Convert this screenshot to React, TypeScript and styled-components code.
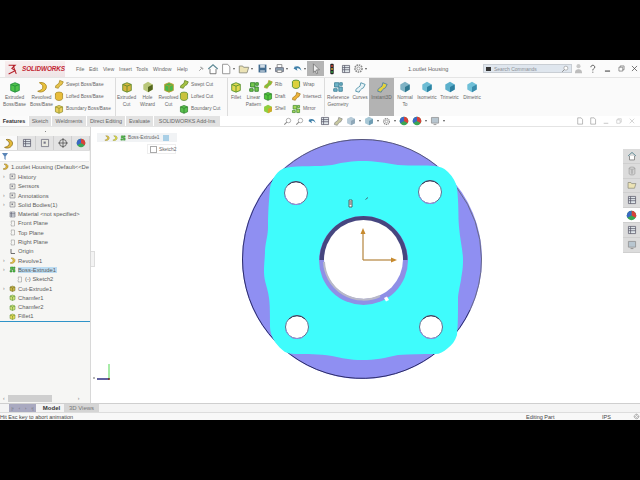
import React from "react";
import styled, { createGlobalStyle } from "styled-components";

const Global = createGlobalStyle`
  html, body { margin: 0; padding: 0; background: #000; }
  body { width: 640px; height: 480px; overflow: hidden; font-family: "Liberation Sans", Arial, sans-serif; color: #3c3c3c; }
  #root { width: 640px; height: 480px; }
`;

const Page = styled.div`
  width: 640px; height: 480px; background: #000; padding: 60px 0; box-sizing: border-box;
`;
const Win = styled.div`
  width: 640px; height: 360px; background: #fff; display: flex; flex-direction: column; overflow: hidden;
`;
const MenuBar = styled.div`
  height: 17px; flex: none; display: flex; align-items: center; background: #fbfbfb; font-size: 5.2px; color: #666;
`;
const Logo = styled.div`
  width: 60px; height: 16px; margin: 0 11px 0 5px; flex: none; display: flex; align-items: center; gap: 3px; padding-left: 2px; box-sizing: border-box;
  background: linear-gradient(#f8eeee, #efe4e6);
  color: #c22330; font-weight: 700; font-style: italic; font-size: 6.4px; letter-spacing: -.1px;
`;
const MenuItem = styled.span<{ $w: number }>` width: ${p => p.$w}px; flex: none; white-space: nowrap; `;
const QuickSlot = styled.div<{ $w: number; $on?: boolean }>`
  width: ${p => p.$w}px; height: 15px; flex: none; display: flex; align-items: center; justify-content: center; gap: 1px;
  background: ${p => (p.$on ? "#b4b4b4" : "transparent")};
`;
const Caret = styled.span` width: 0; height: 0; border-left: 1.5px solid transparent; border-right: 1.5px solid transparent; border-top: 2px solid #555; `;
const Title = styled.div` width: 75px; margin-left: 40px; flex: none; white-space: nowrap; font-size: 5.6px; color: #666; `;
const Search = styled.div`
  width: 89px; height: 9px; flex: none; margin-left: 0; background: #dfe6ee; border: 1px solid #c9ced4; box-sizing: border-box;
  display: flex; align-items: center; font-size: 5px; color: #8b8f95; padding: 0 2px; gap: 3px;
`;
const SearchKey = styled.span` width: 5px; height: 4px; background: #333; flex: none; `;
const SearchText = styled.span` flex: 1; white-space: nowrap; `;

const Ribbon = styled.div`
  height: 39px; flex: none; display: flex; background: #fafafa; border-top: 1px solid #e5e5e5; box-sizing: border-box;
`;
const Group = styled.div<{ $w: number; $line?: boolean }>`
  width: ${p => p.$w}px; flex: none; display: flex; box-sizing: border-box; border-right: ${p => (p.$line ? "1px solid #dcdcdc" : "none")};
`;
const BigBtn = styled.div<{ $w: number; $on?: boolean }>`
  width: ${p => p.$w}px; flex: none; display: flex; flex-direction: column; align-items: center; padding-top: 3px; box-sizing: border-box;
  font-size: 4.8px; line-height: 7px; text-align: center; color: #666; background: ${p => (p.$on ? "#b3b3b3" : "transparent")};
`;
const BigLabel = styled.div` margin-top: 1px; white-space: pre; `;
const SmallCol = styled.div<{ $w: number }>`
  width: ${p => p.$w}px; flex: none; display: flex; flex-direction: column; justify-content: space-around; padding: 0 0 1px; 
`;
const SmallBtn = styled.div`
  display: flex; align-items: center; gap: 2px; font-size: 4.8px; color: #666; white-space: nowrap; height: 12px;
`;

const TabRow = styled.div`
  height: 11px; flex: none; display: flex; align-items: stretch; background: #fff; border-bottom: 1px solid #e4e4e4; box-sizing: border-box;
`;
const Tab = styled.div<{ $w: number; $on?: boolean }>`
  width: ${p => p.$w}px; flex: none; margin-right: 1px; display: flex; align-items: center; justify-content: center; white-space: nowrap;
  font-size: 5.4px; font-weight: ${p => (p.$on ? 700 : 400)}; color: ${p => (p.$on ? "#333" : "#666")};
  background: ${p => (p.$on ? "#fbfbfb" : "#e2e2e2")};
`;
const HeadsUp = styled.div`
  margin-left: 62px; display: flex; align-items: center; gap: 3px; flex: none;
`;
const WinBtns = styled.div`
  margin-left: auto; padding-right: 4px; display: flex; align-items: center; gap: 5px;
`;

const Main = styled.div` flex: 1; display: flex; min-height: 0; `;
const Side = styled.div`
  width: 91px; flex: none; background: #f6f6f4; border-right: 1px solid #d8d8d8; box-sizing: border-box; display: flex; flex-direction: column; position: relative;
`;
const SideGrip = styled.div` height: 9px; flex: none; display: flex; justify-content: center; align-items: center; `;
const GripDot = styled.span` width: 1px; height: 1px; background: #888; `;
const SideTabs = styled.div` height: 15px; flex: none; display: flex; border-bottom: 1px solid #ddd; box-sizing: border-box; `;
const SideTab = styled.div<{ $on?: boolean }>`
  width: 18px; flex: none; display: flex; align-items: center; justify-content: center; box-sizing: border-box;
  background: ${p => (p.$on ? "#fafafa" : "#e3e3e3")}; border-right: 1px solid #cfcfcf;
`;
const FilterRow = styled.div` height: 11px; flex: none; background: #fff; margin-right: 1px; padding-left: 2px; display: flex; align-items: center; border-bottom: 1px solid #e8e8e8; box-sizing: border-box; `;
const Tree = styled.div` flex: none; padding-top: 1px; height: 151px; box-sizing: border-box; border-bottom: 1px solid #2f93c8; overflow: hidden; `;
const Row = styled.div<{ $depth?: number; $sel?: boolean }>`
  height: 9.3px; display: flex; align-items: center; white-space: nowrap; font-size: 5.8px; color: #5c5c5c;
  padding-left: ${p => (p.$depth ?? 2)}px;
`;
const Arrow = styled.span` width: 6px; flex: none; font-size: 5px; color: #777; line-height: 1; `;
const RowText = styled.span<{ $sel?: boolean }>` margin-left: 2px; background: ${p => (p.$sel ? "#bcdcf2" : "transparent")}; padding-right: 1px; `;
const SideFill = styled.div` flex: 1; `;
const HScroll = styled.div` height: 8px; flex: none; margin-bottom: 1px; display: flex; align-items: center; font-size: 5px; color: #777; padding: 0 3px; `;
const HThumb = styled.div` width: 44px; height: 7px; background: #cfcfcf; margin: 0 26px 0 3px; flex: none; `;

const Viewport = styled.div` flex: 1; position: relative; background: #fff; overflow: hidden; `;
const Crumbs = styled.div`
  position: absolute; left: 6px; top: 6px; height: 9px; width: 80px; background: #f1f3f5; display: flex; align-items: center; gap: 2px; padding-left: 7px; box-sizing: border-box; font-size: 4.8px; color: #666;
`;
const CrumbEnd = styled.span` width: 6px; height: 6px; background: #a9cfe6; margin-left: 2px; `;
const SketchTag = styled.div`
  position: absolute; left: 56px; top: 17px; height: 10px; width: 29px; border: 1px solid #eee; box-sizing: border-box; display: flex; align-items: center; gap: 2px; padding-left: 2px; font-size: 4.8px; color: #666; background: #fff;
`;
const Check = styled.span` width: 5px; height: 5px; border: 1px solid #aaa; flex: none; `;
const SideGripTab = styled.div`
  position: absolute; left: 0; top: 124px; width: 3px; height: 14px; background: #f3f3f3; border: 1px solid #ddd; border-left: none;
`;
const Drawing = styled.svg` display: block; position: absolute; left: -91px; top: -127px; `;
const TaskPane = styled.div`
  position: absolute; right: 0; top: 22px; width: 17px; display: flex; flex-direction: column; background: #dcdcdc;
`;
const TaskBtn = styled.div<{ $on?: boolean }>`
  height: 14.8px; display: flex; align-items: center; justify-content: center; background: ${p => (p.$on ? "#fff" : "#dcdcdc")}; border-bottom: 1px solid #cfcfcf; box-sizing: border-box;
`;

const BottomTabs = styled.div`
  height: 9px; flex: none; display: flex; align-items: center; background: #f4f4f4; border-top: 1px solid #cfcfcf; box-sizing: border-box; font-size: 6px; padding-left: 9px;
`;
const Nav = styled.div` width: 27px; height: 8px; background: #a9a9c0; flex: none; margin-right: 5px; display: flex; align-items: center; justify-content: space-around; font-size: 4px; color: #666; `;
const ModelTab = styled.div` width: 21px; flex: none; font-weight: 700; color: #333; text-align: center; margin-right: 2px; `;
const ViewsTab = styled.div` width: 35px; height: 8px; flex: none; background: #d5d5d5; color: #777; text-align: center; line-height: 8px; `;
const Status = styled.div`
  height: 8px; flex: none; display: flex; align-items: center; background: #f8f8f8; border-top: 1px solid #ddd; box-sizing: border-box; font-size: 5.5px; color: #444; white-space: nowrap;
`;
const StatusLeft = styled.span` width: 526px; flex: none; `;
const StatusMid = styled.span` width: 76px; flex: none; `;
const StatusEnd = styled.span` width: 31px; flex: none; `;

type Kind = "box" | "ring" | "swoosh" | "cyl" | "cube" | "home" | "page" | "folder" | "save" | "print" | "undo" | "arrow" | "light" | "list" | "gear" | "mag" | "ball" | "monitor" | "pin" | "user" | "plus" | "plane" | "sq" | "orig" | "cross" | "x" | "min" | "win" | "help" | "trash";

const Ico: React.FC<{ k: Kind; c?: string; c2?: string; s?: number }> = ({ k, c = "#8cc63f", c2 = "#3a7d1d", s = 11 }) => {
  const body = () => {
    switch (k) {
      case "box": return <><path d="M2 4l5-2 5 2v7l-5 2-5-2z" fill={c} stroke={c2} /><path d="M7 6v7M2 4l5 2 5-2" fill="none" stroke={c2} /></>;
      case "ring": return <path d="M4 2c5-1 9 2 8 6s-6 6-10 4c3-1 6-2 6-5s-2-3-4-5z" fill={c} stroke={c2} />;
      case "swoosh": return <path d="M2 12c0-4 3-4 5-6l1-4 5 2-2 4c-3 1-4 3-5 5z" fill={c} stroke={c2} />;
      case "cyl": return <><ellipse cx="7" cy="4" rx="5" ry="2.5" fill={c} stroke={c2} /><path d="M2 4v7c2 3 8 3 10 0V4" fill={c} stroke={c2} /></>;
      case "cube": return <><path d="M7 1l5.5 3v6L7 13l-5.5-3V4z" fill={c} /><path d="M7 7l5.5-3v6L7 13z" fill={c2} /></>;
      case "home": return <><path d="M1.5 7L7 2l5.5 5" fill="none" stroke="#5f8a96" strokeWidth="1.4" /><path d="M3.5 7v5.5h7V7" fill="#fff" stroke="#6b6b6b" /></>;
      case "page": return <path d="M3 1.5h6l2.5 3v8H3z" fill="#fff" stroke="#8a8a8a" />;
      case "folder": return <path d="M1.5 11.5v-8h4l1 1.5h6l-2 6.5z" fill="#ece3b5" stroke="#8a8a7a" />;
      case "save": return <><path d="M2 2h10v10H2z" fill="#416b8f" /><path d="M4 2h6v4H4z" fill="#cfdbe5" /><path d="M4 9h6v3H4z" fill="#9fb4c6" /></>;
      case "print": return <><path d="M4 2h6v4H4z" fill="#fff" stroke="#777" /><path d="M2 6h10v5H2z" fill="#8fa6b8" stroke="#667" /><path d="M4 9h6v3H4z" fill="#fff" stroke="#777" /></>;
      case "undo": return <path d="M3 5c4-2 8-1 9 5-2-3-4-4-6-3l1 3-5-3 3-4z" fill="#3e7fa8" />;
      case "arrow": return <path d="M4 1l7 7H7.5l1.5 4-1.5.5L6 9l-2 2z" fill="#eee" stroke="#666" strokeWidth=".8" />;
      case "light": return <><rect x="5" y="1" width="4" height="12" rx="1" fill="#222" /><circle cx="7" cy="3.5" r="1.1" fill="#d43" /><circle cx="7" cy="7" r="1.1" fill="#da3" /><circle cx="7" cy="10.5" r="1.1" fill="#3a4" /></>;
      case "list": return <><path d="M2 2h10v10H2z" fill="#dfe6ea" stroke="#556" /><path d="M2 5h10M2 8h10M5 2v10" stroke="#556" /></>;
      case "gear": return <><circle cx="7" cy="7" r="4.5" fill="none" stroke="#888" strokeWidth="2" strokeDasharray="2 1" /><circle cx="7" cy="7" r="2" fill="none" stroke="#888" /></>;
      case "mag": return <><circle cx="8.5" cy="5.5" r="3.5" fill="#fff" stroke="#888" /><path d="M6 8l-4 4" stroke="#888" strokeWidth="1.6" /></>;
      case "ball": return <><circle cx="7" cy="7" r="6" fill="#3aa655" /><path d="M7 7V1a6 6 0 0 1 5.2 9z" fill="#d9413a" /><path d="M7 7L1.8 10A6 6 0 0 1 7 1z" fill="#3b68c4" /></>;
      case "monitor": return <><path d="M2 2h10v8H2z" fill="#b8c6d0" stroke="#8a8a8a" /><path d="M5 12h4" stroke="#777" /></>;
      case "pin": return <path d="M4 10l3-3M6 4l4 4M7 3l4 4" stroke="#555" fill="none" />;
      case "user": return <><circle cx="7" cy="4" r="2.6" fill="#c9c9c9" /><path d="M2.5 13c0-4 2-5 4.5-5s4.5 1 4.5 5z" fill="#bdbdbd" /></>;
      case "plus": return <><path d="M3 2h5v5H3zM8 7h4v5H8z" fill={c} stroke={c2} /><path d="M2 9h4v3H2zM9 2h3v3H9z" fill={c} stroke={c2} /></>;
      case "plane": return <path d="M4 2h7v10H4l1-2-1-1 1-2-1-1 1-2z" fill="none" stroke="#888" />;
      case "sq": return <><path d="M2 2h10v10H2z" fill="#e8e8e0" stroke="#667" /><path d="M5 5h3v3H5z" fill="#778" /></>;
      case "orig": return <path d="M4 2v9h8" fill="none" stroke="#444" strokeWidth="1.5" />;
      case "cross": return <><circle cx="7" cy="7" r="5" fill="none" stroke="#444" /><path d="M7 0v14M0 7h14" stroke="#444" /></>;
      case "x": return <path d="M3 3l8 8M11 3l-8 8" stroke={c} strokeWidth="1.1" />;
      case "min": return <path d="M3 11h8" stroke={c} strokeWidth="1.4" />;
      case "win": return <path d="M3 5h6v6H3zM5 5V3h6v6H9" fill="none" stroke={c} />;
      case "help": return <path d="M4.5 5c0-4 6-4 6 0 0 2-3 2-3 5M7.5 12v1.5" fill="none" stroke="#444" strokeWidth="1.4" />;
      case "trash": return <><ellipse cx="7" cy="3" rx="4" ry="1.5" fill="none" stroke="#999" /><path d="M3 3v8c1 2 7 2 8 0V3M6 5v6M8 5v6" fill="none" stroke="#999" /></>;
    }
  };
  return <svg width={s} height={s} viewBox="0 0 14 14" style={{ flex: "none" }}>{body()}</svg>;
};

const big = (label: string, w: number, k: Kind, c: string, c2: string, on?: boolean) => (
  <BigBtn $w={w} $on={on} key={label}><Ico k={k} c={c} c2={c2} s={12} /><BigLabel>{label}</BigLabel></BigBtn>
);
const small = (label: string, k: Kind, c: string, c2: string) => (
  <SmallBtn key={label}><Ico k={k} c={c} c2={c2} s={10} />{label}</SmallBtn>
);

const Y = "#e6c64a", YD = "#9a7c1c", G = "#57c24a", GD = "#2b7d2a";

const treeRows: { t: string; k: Kind; c?: string; c2?: string; arrow?: boolean; d?: number; sel?: boolean }[] = [
  { t: "History", k: "sq", arrow: true },
  { t: "Sensors", k: "sq" },
  { t: "Annotations", k: "sq", arrow: true },
  { t: "Solid Bodies(1)", k: "sq", arrow: true },
  { t: "Material <not specified>", k: "list" },
  { t: "Front Plane", k: "plane" },
  { t: "Top Plane", k: "plane" },
  { t: "Right Plane", k: "plane" },
  { t: "Origin", k: "orig" },
  { t: "Revolve1", k: "ring", c: Y, c2: YD, arrow: true },
  { t: "Boss-Extrude1", k: "plus", c: G, c2: GD, arrow: true, sel: true },
  { t: "(-) Sketch2", k: "plane", d: 16 },
  { t: "Cut-Extrude1", k: "box", c: "#c9b64a", c2: "#6d6a1e", arrow: true },
  { t: "Chamfer1", k: "box", c: "#cfe07a", c2: "#4f8a2a" },
  { t: "Chamfer2", k: "box", c: "#cfe07a", c2: "#4f8a2a" },
  { t: "Fillet1", k: "box", c: "#e6d95a", c2: "#5f8a2a" },
];

const plate = "M285 168 C300 165 318 167 332 165 C345 162 352 161 362 161 C375 161 385 163 398 165 C412 166 425 165 435 166 C442 167 445 169 448 172 C453 177 456 182 457 188 C459 205 458 215 459 227 C460 240 463 250 463 260 C463 270 462 272 461 280 C459 290 458 295 458 298 C458 315 458 325 457 335 C455 341 452 345 448 348 C443 352 440 354 435 354 C422 354 410 354 398 355 C385 358 375 360 362 360 C350 360 342 358 332 356 C318 354 308 354 295 354 C291 354 288 353 285 352 C281 349 278 346 275 342 C272 337 270 332 270 327 C270 315 270 305 269 298 C268 288 264 282 264 272 C264 262 265 258 265 250 C266 240 268 235 268 227 C268 212 269 200 270 188 C272 178 278 170 285 168Z";

const Hole = ({ x, y }: { x: number; y: number }) => (
  <g>
    <circle cx={x} cy={y} r={11.5} fill="#fff" stroke="#5d6d8f" strokeWidth="1" />
    <path d={`M${x - 11} ${y + 3}A11.5 11.5 0 0 0 ${x + 6} ${y + 10}`} fill="none" stroke="#8f8fe0" strokeWidth="1" />
    <path d={`M${x - 8} ${y - 8}A11.5 11.5 0 0 1 ${x + 8} ${y - 8}`} fill="none" stroke="#333a55" strokeWidth="1" />
  </g>
);

export default function App() {
  return (
    <Page>
      <Global />
      <Win>
        <MenuBar>
          <Logo>
            <svg width="12" height="12" viewBox="0 0 10 11"><path d="M1 2h6L4 5l3 2-6 3M5 2l3 8" fill="none" stroke="#b5202a" strokeWidth="1" /></svg>
            SOLIDWORKS
          </Logo>
          {[["File", 13], ["Edit", 14], ["View", 16], ["Insert", 17], ["Tools", 17], ["Window", 24], ["Help", 17]].map(([t, w]) => (
            <MenuItem $w={w as number} key={t as string}>{t}</MenuItem>
          ))}
          <QuickSlot $w={13}><Ico k="pin" s={8} /></QuickSlot>
          <QuickSlot $w={12}><Ico k="home" s={12} /></QuickSlot>
          <QuickSlot $w={16}><Ico k="page" s={12} /><Caret /></QuickSlot>
          <QuickSlot $w={20}><Ico k="folder" s={12} /><Caret /></QuickSlot>
          <QuickSlot $w={17}><Ico k="save" s={11} /><Caret /></QuickSlot>
          <QuickSlot $w={18}><Ico k="print" s={11} /><Caret /></QuickSlot>
          <QuickSlot $w={17}><Ico k="undo" s={11} /><Caret /></QuickSlot>
          <QuickSlot $w={17} $on><Ico k="arrow" s={12} /></QuickSlot>
          <QuickSlot $w={16}><Ico k="light" s={12} /></QuickSlot>
          <QuickSlot $w={11}><Ico k="list" s={10} /></QuickSlot>
          <QuickSlot $w={17}><Ico k="gear" s={11} /><Caret /></QuickSlot>
          <Title>1.outlet Housing</Title>
          <Search><SearchKey /><SearchText>Search Commands</SearchText><Ico k="mag" s={8} /></Search>
          <QuickSlot $w={13}><Ico k="user" s={11} /></QuickSlot>
          <QuickSlot $w={15}><Ico k="help" s={9} /></QuickSlot>
          <QuickSlot $w={14}><Ico k="min" c="#222" s={9} /></QuickSlot>
          <QuickSlot $w={14}><Ico k="win" c="#666" s={9} /></QuickSlot>
          <QuickSlot $w={13}><Ico k="x" c="#444" s={9} /></QuickSlot>
        </MenuBar>
        <Ribbon>
          <Group $w={116} $line>
            {big("Extruded\nBoss/Base", 29, "box", "#4fc24a", "#1f8d3a")}
            {big("Revolved\nBoss/Base", 25, "ring", "#e9c23c", "#a8841d")}
            <SmallCol $w={62}>
              {small("Swept Boss/Base", "swoosh", "#e7c44d", "#a08420")}
              {small("Lofted Boss/Base", "cyl", "#e9bd3b", "#a08420")}
              {small("Boundary Boss/Base", "box", "#e9cf5a", "#8c8a24")}
            </SmallCol>
          </Group>
          <Group $w={112} $line>
            {big("Extruded\nCut", 21, "box", "#d6b53d", "#5d8a2a")}
            {big("Hole\nWizard", 21, "cube", "#b9c77a", "#54661e")}
            {big("Revolved\nCut", 21, "box", "#4ab84a", "#b99a2a")}
            <SmallCol $w={49}>
              {small("Swept Cut", "swoosh", "#a6c244", "#597c1f")}
              {small("Lofted Cut", "cyl", "#c9c23c", "#4f8a2a")}
              {small("Boundary Cut", "box", "#58c04e", "#2d7d2a")}
            </SmallCol>
          </Group>
          <Group $w={97} $line>
            {big("Fillet", 16, "box", "#e2d94f", "#4f8f2a")}
            {big("Linear\nPattern", 19, "plus", "#76c84e", "#2d7d2a")}
            <SmallCol $w={28}>
              {small("Rib", "swoosh", "#7cc23c", "#b99a2a")}
              {small("Draft", "box", "#52c63c", "#2d7d2a")}
              {small("Shell", "cube", "#8fce3f", "#d0a82a")}
            </SmallCol>
            <SmallCol $w={34}>
              {small("Wrap", "cyl", "#dcd13c", "#2d7d2a")}
              {small("Intersect", "swoosh", "#efb43a", "#a07820")}
              {small("Mirror", "plus", "#a6d65a", "#3c8a2a")}
            </SmallCol>
          </Group>
          {big("Reference\nGeometry", 26, "plus", "#6fb4c8", "#3d7f96")}
          {big("Curves", 18, "swoosh", "#e6f2f6", "#4a8ea6")}
          {big("Instant3D", 25, "swoosh", "#e6d23c", "#4a7ea6", true)}
          {big("Normal\nTo", 22, "cube", "#7fb2c4", "#2f7890")}
          {big("Isometric", 22, "cube", "#6dbcd4", "#2d83a2")}
          {big("Trimetric", 23, "cube", "#5cb0cc", "#2d7fa0")}
          {big("Dimetric", 22, "cube", "#6fc0d8", "#3a8cac")}
        </Ribbon>
        <TabRow>
          <Tab $w={28} $on>Features</Tab>
          <Tab $w={22}>Sketch</Tab>
          <Tab $w={34}>Weldments</Tab>
          <Tab $w={38}>Direct Editing</Tab>
          <Tab $w={27}>Evaluate</Tab>
          <Tab $w={66}>SOLIDWORKS Add-Ins</Tab>
          <HeadsUp>
            <Ico k="mag" s={9} /><Ico k="mag" s={9} /><Ico k="undo" c="#999" s={10} /><Ico k="list" s={10} /><Ico k="swoosh" c="#c8c8a0" c2="#888" s={10} />
            <Ico k="cube" c="#b7cbd8" c2="#8fa8b8" s={10} /><Caret /><Ico k="cube" c="#a8c8d6" c2="#6f9db3" s={10} /><Caret /><Ico k="gear" s={9} /><Caret />
            <Ico k="ball" s={10} /><Ico k="ball" s={10} /><Caret /><Ico k="monitor" s={10} /><Caret />
          </HeadsUp>
          <WinBtns>
            <Ico k="page" s={8} /><Ico k="page" s={8} /><Ico k="min" c="#bbb" s={8} /><Ico k="win" c="#bbb" s={8} /><Ico k="x" c="#bbb" s={8} />
          </WinBtns>
        </TabRow>
        <Main>
          <Side>
            <SideGrip><GripDot /></SideGrip>
            <SideTabs>
              <SideTab $on><Ico k="ring" c="#e3b93a" c2="#8a6d16" s={11} /></SideTab>
              <SideTab><Ico k="list" s={10} /></SideTab>
              <SideTab><Ico k="sq" s={10} /></SideTab>
              <SideTab><Ico k="cross" s={10} /></SideTab>
              <SideTab><Ico k="ball" s={10} /></SideTab>
            </SideTabs>
            <FilterRow><svg width="6" height="7" viewBox="0 0 6 7"><path d="M0 0h6L3.6 3.5V7L2.4 6V3.5z" fill="#5b86b8" /></svg></FilterRow>
            <Row><Ico k="ring" c="#e3b93a" c2="#8a6d16" s={7} /><RowText>1.outlet Housing  (Default&lt;&lt;De</RowText></Row>
            <Tree>
              {treeRows.map(r => (
                <Row key={r.t} $depth={r.d ?? 3}>
                  {!r.d && <Arrow>{r.arrow ? "›" : ""}</Arrow>}
                  <Ico k={r.k} c={r.c} c2={r.c2} s={7} />
                  <RowText $sel={r.sel}>{r.t}</RowText>
                </Row>
              ))}
            </Tree>
            <SideFill />
            <HScroll>‹<HThumb />›</HScroll>
          </Side>
          <Viewport>
            <Drawing width="640" height="480" viewBox="0 0 640 480">
              <circle cx="362" cy="259" r="120" fill="#8f8ff2" />
              <path d="M242.5 259A119.5 119.5 0 0 0 470 310" fill="none" stroke="#2b2b66" strokeWidth="1" />
              <path d="M285 168A119.5 119.5 0 0 1 362 139.500A119.500 119.500 0 0 1 437 166" fill="none" stroke="#55557a" strokeWidth="1" />
              <path d="M242.500 259A119.500 119.500 0 0 1 285 168" fill="none" stroke="#33336f" strokeWidth="1" />
              <path d="M457 188A119.500 119.500 0 0 1 481.500 259A119.500 119.500 0 0 1 470 310" fill="none" stroke="#6a6a88" strokeWidth="1" />
              <path d={plate} fill="#3ffcfc" />
              <circle cx="363.500" cy="260.500" r="44.500" fill="#8f8fe6" />
              <path d="M319.500 260A44 44 0 0 1 407.500 260Z" fill="#46467f" />
              <circle cx="363.500" cy="259.500" r="39.500" fill="#fff" />
              <path d="M324 262A39.500 39.500 0 0 0 380 296" fill="none" stroke="#b9b9c8" strokeWidth="2" />
              <path d="M384 298l3 -1.500 2 3.500 -3 1.500z" fill="#fff" />
              <Hole x={296} y={193} /><Hole x={430} y={192} /><Hole x={297} y={327} /><Hole x={431} y={327} />
              <path d="M363 260V232" stroke="#b4843c" strokeWidth="1.200" />
              <path d="M363 228l-2.500 6h5z" fill="#c78a2e" />
              <path d="M363 260H392" stroke="#b4843c" strokeWidth="1.200" />
              <path d="M397 260l-6 -2.500v5z" fill="#c78a2e" />
              <path d="M349 200h3v7h-3z" fill="#fff" stroke="#444" strokeWidth=".8" />
              <path d="M349.500 201l2 2 -2 2M351.500 201l-2 2 2 2" stroke="#444" strokeWidth=".6" fill="none" />
              <path d="M365.500 199.500l2.500 -2" stroke="#445" strokeWidth=".8" />
              <path d="M109 379V364" stroke="#6ee06e" strokeWidth="1.200" />
              <path d="M109 379H97" stroke="#2b2b80" strokeWidth="1.500" />
              <circle cx="109" cy="379" r="1" fill="#732" />
              <path d="M94 377v2" stroke="#444" strokeWidth=".8" />
            </Drawing>
            <Crumbs><Ico k="ring" c="#e3c94a" c2="#8a7a20" s={6} /><Ico k="ring" c="#e3e04a" c2="#8a8a20" s={6} /><Ico k="plus" c={G} c2={GD} s={6} />Boss-Extrude1<CrumbEnd /></Crumbs>
            <SketchTag><Check />Sketch2</SketchTag>
            <SideGripTab />
            <TaskPane>
              <TaskBtn><Ico k="home" s={10} /></TaskBtn>
              <TaskBtn><Ico k="trash" s={10} /></TaskBtn>
              <TaskBtn><Ico k="folder" s={10} /></TaskBtn>
              <TaskBtn><Ico k="list" s={10} /></TaskBtn>
              <TaskBtn $on><Ico k="ball" s={11} /></TaskBtn>
              <TaskBtn><Ico k="list" s={10} /></TaskBtn>
              <TaskBtn><Ico k="monitor" s={10} /></TaskBtn>
            </TaskPane>
          </Viewport>
        </Main>
        <BottomTabs>
          <Nav><span>|‹</span><span>‹</span><span>›</span><span>›|</span></Nav>
          <ModelTab>Model</ModelTab>
          <ViewsTab>3D Views</ViewsTab>
        </BottomTabs>
        <Status>
          <StatusLeft>Hit Esc key to abort animation</StatusLeft>
          <StatusMid>Editing Part</StatusMid>
          <StatusEnd>IPS</StatusEnd>
          <Ico k="gear" s={7} />
        </Status>
      </Win>
    </Page>
  );
}
